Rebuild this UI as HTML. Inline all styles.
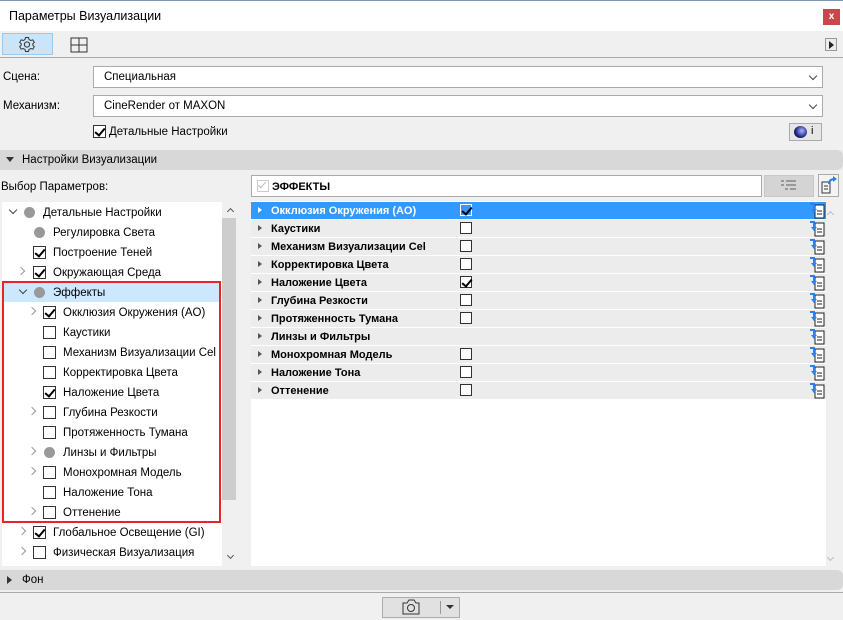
<!DOCTYPE html><html><head><meta charset="utf-8"><style>
*{box-sizing:border-box;margin:0;padding:0}
body{width:843px;height:620px;background:#f0f0f0;font-family:"Liberation Sans","DejaVu Sans",sans-serif;font-size:12px;color:#000;position:relative;overflow:hidden}
.a{position:absolute}
.cb{position:absolute;width:13px;height:13px;border:1px solid #333;background:#fff}
.cb.c::after{content:"";position:absolute;left:3px;top:0px;width:4px;height:8px;border:solid #000;border-width:0 2px 2px 0;transform:rotate(40deg)}
.dot{position:absolute;width:11px;height:11px;border-radius:50%;background:#999}
.chev{position:absolute;width:6px;height:6px;border:solid #999;border-width:0 1.5px 1.5px 0;transform:rotate(-45deg)}
.chevd{position:absolute;width:6px;height:6px;border:solid #444;border-width:0 1.5px 1.5px 0;transform:rotate(45deg)}
.tl{position:absolute;font-size:11.5px;white-space:nowrap;padding-top:1px}
.row{position:absolute;left:251px;width:575px;height:17px;background:#ececec;font-weight:bold;font-size:11px}
.row .tri{position:absolute;left:7px;top:5px;border-left:4px solid #555;border-top:3.5px solid transparent;border-bottom:3.5px solid transparent}
.row span{position:absolute;left:20px;top:3px}
.row .cb{left:209px;top:2px;width:12px;height:12px}
.ic{position:absolute;left:558px;top:0px}
</style></head><body>
<div class="a" style="left:0;top:0;width:843px;height:31px;background:#fff;border-top:1px solid #7a9ab8"></div>
<div class="tl" style="left:9px;top:8px;font-size:12.5px">Параметры Визуализации</div>
<div class="a" style="left:823px;top:9px;width:17px;height:16px;background:#c9474b;color:#fff;font-weight:bold;font-size:10px;text-align:center;line-height:15px">x</div>
<div class="a" style="left:2px;top:33px;width:51px;height:22px;background:#cce4f7;border:1px solid #99c9ef"></div>
<svg class="a" style="left:18px;top:36px" width="18" height="17" viewBox="0 0 18 17"><circle cx="9" cy="8.5" r="2.6" fill="none" stroke="#333"/><path d="M7.5 1.5h3l.5 2 1.8 1 2-.7 1.5 2.6-1.5 1.4v1.4l1.5 1.4-1.5 2.6-2-.7-1.8 1-.5 2h-3l-.5-2-1.8-1-2 .7-1.5-2.6 1.5-1.4V7.8L1.7 6.4l1.5-2.6 2 .7 1.8-1z" fill="none" stroke="#333"/></svg>
<svg class="a" style="left:70px;top:37px" width="18" height="16"><rect x="1" y="1" width="16" height="14" fill="none" stroke="#333"/><path d="M9 1v14M1 8h16" stroke="#333"/></svg>
<div class="a" style="left:825px;top:38px;width:12px;height:13px;border:1px solid #999;background:#ececec"></div>
<div class="a" style="left:829px;top:41px;border-left:5px solid #222;border-top:4px solid transparent;border-bottom:4px solid transparent"></div>
<div class="a" style="left:0;top:57px;width:843px;height:1px;background:#aaa"></div>
<div class="tl" style="left:3px;top:70px">Сцена:</div>
<div class="a" style="left:93px;top:66px;width:730px;height:22px;background:#fff;border:1px solid #aaa"></div>
<div class="tl" style="left:104px;top:70px">Специальная</div>
<div class="chevd" style="left:810px;top:73px"></div>
<div class="tl" style="left:3px;top:99px">Механизм:</div>
<div class="a" style="left:93px;top:95px;width:730px;height:22px;background:#fff;border:1px solid #aaa"></div>
<div class="tl" style="left:104px;top:99px">CineRender от MAXON</div>
<div class="chevd" style="left:810px;top:102px"></div>
<div class="cb c" style="left:93px;top:125px"></div>
<div class="tl" style="left:109px;top:125px">Детальные Настройки</div>
<div class="a" style="left:789px;top:123px;width:33px;height:18px;border:1px solid #aaa;background:#e6e6e6"></div>
<div class="a" style="left:794px;top:126px;width:13px;height:12px;border-radius:50%;background:radial-gradient(circle at 60% 40%,#aab8ff,#1a237e 60%,#000)"></div>
<div class="tl" style="left:811px;top:124px;font-size:11px">i</div>
<div class="a" style="left:0;top:150px;width:843px;height:20px;background:#d8d8d8;border-radius:0 6px 6px 0"></div>
<div class="a" style="left:6px;top:157px;border-top:5px solid #333;border-left:4px solid transparent;border-right:4px solid transparent"></div>
<div class="tl" style="left:22px;top:153px">Настройки Визуализации</div>
<div class="tl" style="left:1px;top:180px">Выбор Параметров:</div>
<div class="a" style="left:251px;top:175px;width:511px;height:22px;background:#fff;border:1px solid #aaa"></div>
<div class="a" style="left:257px;top:180px;width:12px;height:12px;border:1px solid #ccc"></div>
<div class="a" style="left:260px;top:180px;width:4px;height:8px;border:solid #bbb;border-width:0 1.5px 1.5px 0;transform:rotate(40deg)"></div>
<div class="tl" style="left:272px;top:180px;font-weight:bold;font-size:11px">ЭФФЕКТЫ</div>
<div class="a" style="left:764px;top:175px;width:50px;height:22px;background:#d4d4d4;border:1px solid #c8c8c8"></div>
<svg class="a" style="left:780px;top:179px" width="18" height="14"><path d="M1 2h3M1 6h3M5 10h3M6 2h10M6 6h10M10 10h6" stroke="#999" stroke-width="2"/></svg>
<div class="a" style="left:818px;top:174px;width:21px;height:23px;border:1px solid #aaa;background:#f4f4f4"></div>
<svg class="a" style="left:820px;top:176px" width="18" height="19"><path d="M2 6h8v11H2z" fill="none" stroke="#333"/><path d="M4 10h4M4 13h4" stroke="#333"/><path d="M9 8c0-4 3-5 6-5" fill="none" stroke="#2f7fe8" stroke-width="2"/><path d="M13 0l4 3-4 3z" fill="#2f7fe8"/></svg>
<!-- left tree -->
<div class="a" style="left:2px;top:202px;width:220px;height:364px;background:#fff"></div>
<div class="a" style="left:222px;top:202px;width:14px;height:364px;background:#f0f0f0"></div>
<div class="a" style="left:222px;top:218px;width:14px;height:282px;background:#cdcdcd"></div>
<div class="a" style="left:228px;top:209px;width:5px;height:5px;border:solid #555;border-width:1.5px 0 0 1.5px;transform:rotate(45deg)"></div>
<div class="a" style="left:228px;top:553px;width:5px;height:5px;border:solid #555;border-width:0 1.5px 1.5px 0;transform:rotate(45deg)"></div>
<div class="a" style="left:2px;top:282px;width:218px;height:20px;background:#cce8ff"></div>
<div class="a" style="left:2px;top:281px;width:219px;height:242px;border:2px solid #e8232a"></div>
<div class="chevd" style="left:10px;top:207px"></div><div class="dot" style="left:24px;top:207px"></div><div class="tl" style="left:43px;top:206px">Детальные Настройки</div>
<div class="dot" style="left:34px;top:227px"></div><div class="tl" style="left:53px;top:226px">Регулировка Света</div>
<div class="cb c" style="left:33px;top:246px"></div><div class="tl" style="left:53px;top:246px">Построение Теней</div>
<div class="chev" style="left:18px;top:268px"></div><div class="cb c" style="left:33px;top:266px"></div><div class="tl" style="left:53px;top:266px">Окружающая Среда</div>
<div class="chevd" style="left:20px;top:287px"></div><div class="dot" style="left:34px;top:287px"></div><div class="tl" style="left:53px;top:286px">Эффекты</div>
<div class="chev" style="left:29px;top:308px"></div><div class="cb c" style="left:43px;top:306px"></div><div class="tl" style="left:63px;top:306px">Окклюзия Окружения (AO)</div>
<div class="cb" style="left:43px;top:326px"></div><div class="tl" style="left:63px;top:326px">Каустики</div>
<div class="cb" style="left:43px;top:346px"></div><div class="tl" style="left:63px;top:346px">Механизм Визуализации Cel</div>
<div class="cb" style="left:43px;top:366px"></div><div class="tl" style="left:63px;top:366px">Корректировка Цвета</div>
<div class="cb c" style="left:43px;top:386px"></div><div class="tl" style="left:63px;top:386px">Наложение Цвета</div>
<div class="chev" style="left:29px;top:408px"></div><div class="cb" style="left:43px;top:406px"></div><div class="tl" style="left:63px;top:406px">Глубина Резкости</div>
<div class="cb" style="left:43px;top:426px"></div><div class="tl" style="left:63px;top:426px">Протяженность Тумана</div>
<div class="chev" style="left:29px;top:448px"></div><div class="dot" style="left:44px;top:447px"></div><div class="tl" style="left:63px;top:446px">Линзы и Фильтры</div>
<div class="chev" style="left:29px;top:468px"></div><div class="cb" style="left:43px;top:466px"></div><div class="tl" style="left:63px;top:466px">Монохромная Модель</div>
<div class="cb" style="left:43px;top:486px"></div><div class="tl" style="left:63px;top:486px">Наложение Тона</div>
<div class="chev" style="left:29px;top:508px"></div><div class="cb" style="left:43px;top:506px"></div><div class="tl" style="left:63px;top:506px">Оттенение</div>
<div class="chev" style="left:19px;top:528px"></div><div class="cb c" style="left:33px;top:526px"></div><div class="tl" style="left:53px;top:526px">Глобальное Освещение (GI)</div>
<div class="chev" style="left:19px;top:548px"></div><div class="cb" style="left:33px;top:546px"></div><div class="tl" style="left:53px;top:546px">Физическая Визуализация</div>
<!-- right list -->
<div class="a" style="left:251px;top:201px;width:575px;height:365px;background:#fff"></div>
<div class="a" style="left:828px;top:212px;width:5px;height:5px;border:solid #bbb;border-width:1.5px 0 0 1.5px;transform:rotate(45deg)"></div>
<div class="a" style="left:828px;top:555px;width:5px;height:5px;border:solid #bbb;border-width:0 1.5px 1.5px 0;transform:rotate(45deg)"></div>
<div id="rows"></div>
<script>
var r=[["Окклюзия Окружения (AO)",2],["Каустики",1],["Механизм Визуализации Cel",1],["Корректировка Цвета",1],["Наложение Цвета",2],["Глубина Резкости",1],["Протяженность Тумана",1],["Линзы и Фильтры",0],["Монохромная Модель",1],["Наложение Тона",1],["Оттенение",1]];
var h="";r.forEach(function(x,i){var y=202+i*18;var sel=i==0;
h+='<div class="row" style="top:'+y+'px;'+(sel?'background:#3399ff;color:#fff':'')+'"><div class="tri" style="'+(sel?'border-left-color:#fff':'')+'"></div><span>'+x[0]+'</span>'+(x[1]?'<div class="cb'+(x[1]==2?' c':'')+'" style="'+(sel?'border-color:#fff;background:#3399ff':'')+'"></div>':'')+
'<svg class="ic" width="17" height="17"><rect x="6" y="3" width="9" height="13" fill="#fff" stroke="#222"/><path d="M8 9h5M8 12h5" stroke="#222"/><path d="M1 2h4v6" fill="none" stroke="#2f7fe8" stroke-width="2"/><path d="M2 7h6l-3 4z" fill="#2f7fe8"/></svg></div>';});
document.getElementById("rows").innerHTML=h;
</script>
<div class="a" style="left:0;top:570px;width:843px;height:20px;background:#d8d8d8;border-radius:0 6px 6px 0"></div>
<div class="a" style="left:7px;top:576px;border-left:5px solid #333;border-top:4px solid transparent;border-bottom:4px solid transparent"></div>
<div class="tl" style="left:22px;top:573px">Фон</div>
<div class="a" style="left:0;top:592px;width:843px;height:1px;background:#aaa"></div>
<div class="a" style="left:382px;top:597px;width:78px;height:21px;background:#e1e1e1;border:1px solid #adadad"></div>
<svg class="a" style="left:401px;top:599px" width="20" height="16"><path d="M2 4h4l2-3h5l2 3h3v11H2z" fill="none" stroke="#333"/><circle cx="10" cy="9" r="3.5" fill="none" stroke="#333"/></svg>
<div class="a" style="left:440px;top:601px;width:1px;height:13px;background:#999"></div>
<div class="a" style="left:446px;top:605px;border-top:4px solid #333;border-left:4px solid transparent;border-right:4px solid transparent"></div>
</body></html>
